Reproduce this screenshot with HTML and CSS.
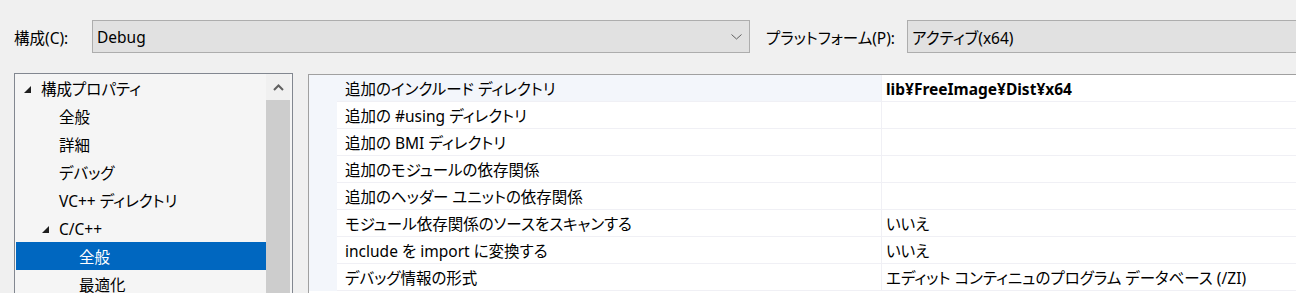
FILE: index.html
```html
<!DOCTYPE html>
<html>
  <head>
    <meta charset="utf-8">
    <title>プロパティ ページ</title>
    <link rel="stylesheet" href="styles.css">
  </head>
  <body>
    <div class="toolbar">
      <label class="field-label label-config">構成(C):</label>
      <div class="combo combo-config">
        <span>Debug</span>
        <svg class="chevron" width="11" height="6" viewBox="0 0 11 6">
          <polyline points="0.5,0.5 5.5,5 10.5,0.5" fill="none" stroke="#606060" stroke-width="1"/>
        </svg>
      </div>
      <label class="field-label label-platform">プラットフォーム(P):</label>
      <div class="combo combo-platform">
        <span>アクティブ(x64)</span>
      </div>
    </div>

    <div class="main">
      <div class="tree">
        <ul class="tree-items">
          <li class="lvl1">
            <svg class="expander" width="7" height="7" viewBox="0 0 7 7"><polygon points="7,0 7,7 0,7" fill="#1e1e1e"/></svg>
            構成プロパティ
          </li>
          <li class="lvl2">全般</li>
          <li class="lvl2">詳細</li>
          <li class="lvl2">デバッグ</li>
          <li class="lvl2">VC++ ディレクトリ</li>
          <li class="lvl2 has-child">
            <svg class="expander" width="7" height="7" viewBox="0 0 7 7"><polygon points="7,0 7,7 0,7" fill="#1e1e1e"/></svg>
            C/C++
          </li>
          <li class="lvl3 selected">全般</li>
          <li class="lvl3">最適化</li>
        </ul>
        <div class="scrollbar">
          <div class="scroll-arrow">
            <svg width="11" height="7" viewBox="0 0 11 7">
              <polyline points="1,6 5.5,1.5 10,6" fill="none" stroke="#606060" stroke-width="2"/>
            </svg>
          </div>
          <div class="scroll-thumb"></div>
        </div>
      </div>

      <div class="grid">
        <div class="row current">
          <div class="gutter"></div>
          <div class="name">追加のインクルード ディレクトリ</div>
          <div class="value bold">lib¥FreeImage¥Dist¥x64</div>
        </div>
        <div class="row">
          <div class="gutter"></div>
          <div class="name">追加の #using ディレクトリ</div>
          <div class="value"></div>
        </div>
        <div class="row">
          <div class="gutter"></div>
          <div class="name">追加の BMI ディレクトリ</div>
          <div class="value"></div>
        </div>
        <div class="row">
          <div class="gutter"></div>
          <div class="name">追加のモジュールの依存関係</div>
          <div class="value"></div>
        </div>
        <div class="row">
          <div class="gutter"></div>
          <div class="name">追加のヘッダー ユニットの依存関係</div>
          <div class="value"></div>
        </div>
        <div class="row">
          <div class="gutter"></div>
          <div class="name">モジュール依存関係のソースをスキャンする</div>
          <div class="value">いいえ</div>
        </div>
        <div class="row">
          <div class="gutter"></div>
          <div class="name">include を import に変換する</div>
          <div class="value">いいえ</div>
        </div>
        <div class="row">
          <div class="gutter"></div>
          <div class="name">デバッグ情報の形式</div>
          <div class="value">エディット コンティニュのプログラム データベース (/ZI)</div>
        </div>
      </div>
    </div>
  </body>
</html>
```

FILE: styles.css
```css
body, html {
  margin: 0;
  width: 1296px;
  height: 293px;
  overflow: hidden;
}
body {
  background-color: #f0f0f0;
  font-family: "Noto Sans", "Noto Sans CJK JP", sans-serif;
  font-size: 15.5px;
  font-feature-settings: "palt";
  color: #000;
}

/* top bar */
.toolbar {
  display: flex;
  align-items: center;
  padding: 20px 0 0 14px;
  height: 33px;
}

.field-label {
  white-space: nowrap;
  flex-shrink: 0;
  padding-top: 1px;
}

.label-config {
  width: 78px;
}

.label-platform {
  width: 141px;
  margin-left: 16px;
}

.combo {
  box-sizing: border-box;
  height: 33px;
  display: flex;
  align-items: center;
  padding-left: 4px;
  padding-top: 1px;
  background-color: #e1e1e1;
  border: 1px solid #adadad;
  flex-shrink: 0;
}

.combo-config {
  width: 658px;
  justify-content: space-between;
  padding-right: 7px;
}

.combo-platform {
  width: 400px;
}

.chevron {
  display: block;
}

/* main area */
.main {
  display: flex;
  align-items: flex-start;
  padding-left: 14px;
  margin-top: 20px;
}

.tree {
  box-sizing: border-box;
  width: 279px;
  height: 220px;
  display: flex;
  border: 1px solid #828790;
  border-bottom: none;
  background-color: #f5f5f5;
  padding-right: 2px;
  flex-shrink: 0;
}

.tree-items {
  list-style: none;
  margin: 0;
  padding: 0 0 0 1px;
  flex: 1;
}

.tree-items li {
  box-sizing: border-box;
  height: 28px;
  padding-top: 2px;
  line-height: 26px;
  white-space: nowrap;
  display: flex;
  align-items: center;
}

.expander {
  margin-right: 10px;
}

.lvl1 {
  padding-left: 8px;
}

.lvl2 {
  padding-left: 43px;
}

.lvl2.has-child {
  padding-left: 26px;
}

.lvl3 {
  padding-left: 63px;
}

.tree-items .selected {
  background-color: #0067c0;
  color: #fff;
}

.scrollbar {
  width: 24px;
  display: flex;
  flex-direction: column;
  background-color: #f0f0f0;
}

.scroll-arrow {
  height: 26px;
  display: flex;
  align-items: center;
  justify-content: center;
}

.scroll-thumb {
  flex: 1;
  background-color: #cdcdcd;
}

/* property grid */
.grid {
  margin-left: 15px;
  margin-top: 1px;
  width: 1000px;
  height: 219px;
  border-top: 1px solid #a0a0a0;
  border-left: 1px solid #a0a0a0;
  background-color: #fff;
  flex-shrink: 0;
}

.row {
  display: flex;
  height: 27px;
}

.gutter {
  width: 28px;
  background-color: #f3f6fb;
}

.name {
  box-sizing: border-box;
  width: 544px;
  padding: 2px 0 0 8px;
  line-height: 24px;
  border-bottom: 1px solid #f0f0f5;
  white-space: nowrap;
}

.current .name {
  background-color: #f3f6fb;
}

.value {
  flex: 1;
  padding: 2px 0 0 4px;
  line-height: 24px;
  border-left: 1px solid #f0f0f5;
  border-bottom: 1px solid #f0f0f5;
  white-space: nowrap;
}

.bold {
  font-weight: bold;
}
```
